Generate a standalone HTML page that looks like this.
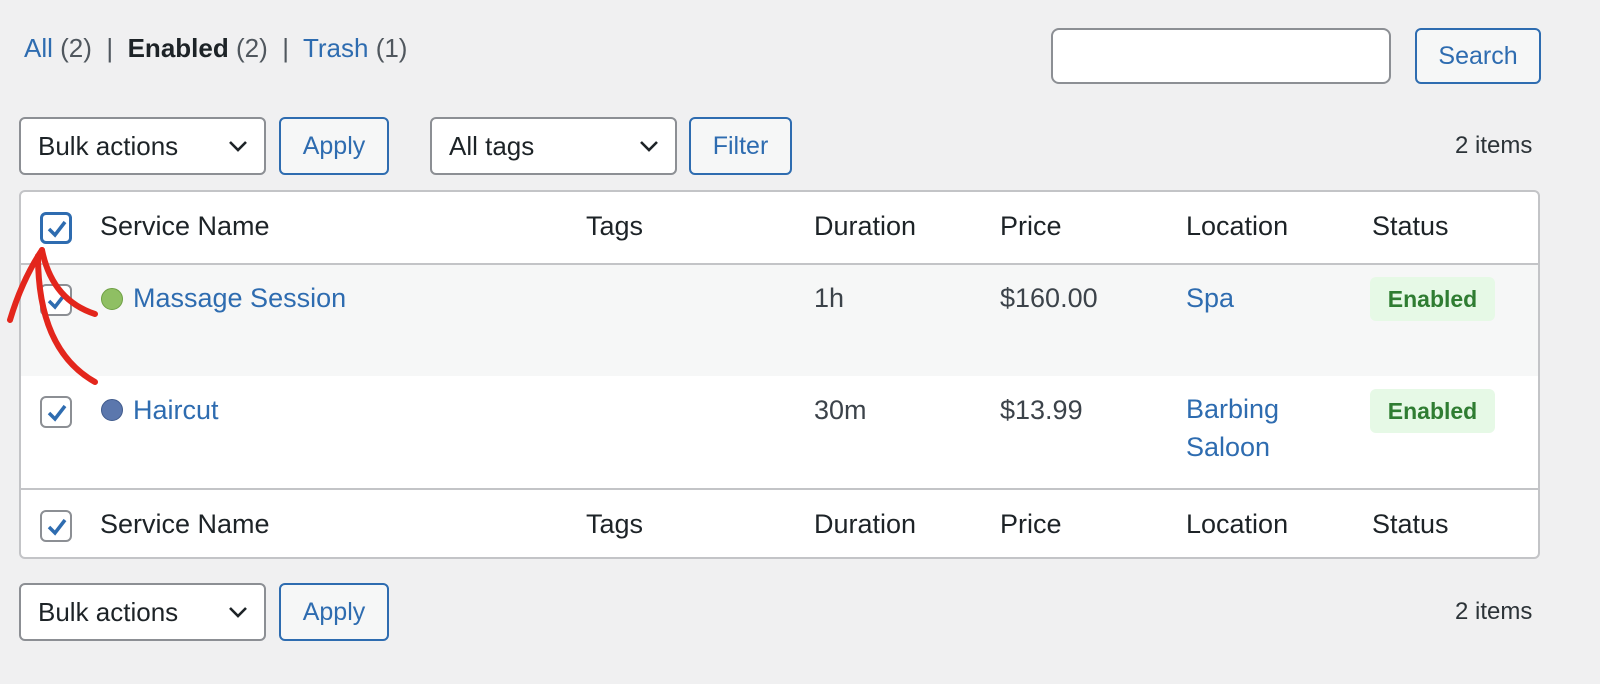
<!DOCTYPE html>
<html><head><style>
*{box-sizing:border-box;margin:0;padding:0}
body{width:1600px;height:684px;background:#f0f0f1;font-family:"Liberation Sans",sans-serif;color:#1d2327;position:relative;overflow:hidden;font-size:27px}
.a{position:absolute;white-space:nowrap}
.blue{color:#2e6cb0}
.grey{color:#50575e}
.btn{position:absolute;border:2px solid #2e6cb0;border-radius:6px;color:#2e6cb0;background:#f6f7f7;display:flex;align-items:center;justify-content:center;font-size:25px}
.sel{position:absolute;border:2px solid #8c8f94;border-radius:6px;background:#fff;font-size:26px;padding-left:17px;display:flex;align-items:center}
.sel svg{position:absolute;right:16px;top:50%;margin-top:-6px}
.cb{position:absolute;width:32px;height:32px;border:2px solid #8c8f94;border-radius:6px;background:#fff}
.cb svg{position:absolute;left:3px;top:3px}
.tbl{position:absolute;left:19px;top:190px;width:1521px;height:369px;background:#fff;border:2px solid #c3c4c7;border-radius:6px;overflow:hidden}
.badge{position:absolute;background:#e6f9e6;color:#2f7d32;border-radius:6px;width:125px;height:44px;display:flex;align-items:center;justify-content:center;font-size:23px;font-weight:bold}
.dot{position:absolute;width:22px;height:22px;border-radius:50%}
</style></head><body>
<div class="a" style="left:24px;top:33px;font-size:26px"><span class="blue">All</span> <span class="grey">(2)</span> <span style="color:#50575e">&nbsp;|&nbsp;</span> <b>Enabled</b> <span class="grey">(2)</span> <span style="color:#50575e">&nbsp;|&nbsp;</span> <span class="blue">Trash</span> <span class="grey">(1)</span></div>
<div class="a" style="left:1051px;top:28px;width:340px;height:56px;border:2px solid #8c8f94;border-radius:8px;background:#fff"></div>
<div class="btn" style="left:1415px;top:28px;width:126px;height:56px">Search</div>

<div class="sel" style="left:19px;top:117px;width:247px;height:58px">Bulk actions<svg width="20" height="12"><path d="M2 2 L10 10 L18 2" stroke="#1d2327" stroke-width="2.6" fill="none"/></svg></div>
<div class="btn" style="left:279px;top:117px;width:110px;height:58px">Apply</div>
<div class="sel" style="left:430px;top:117px;width:247px;height:58px">All tags<svg width="20" height="12"><path d="M2 2 L10 10 L18 2" stroke="#1d2327" stroke-width="2.6" fill="none"/></svg></div>
<div class="btn" style="left:689px;top:117px;width:103px;height:58px">Filter</div>
<div class="a grey" style="left:1455px;top:132px;font-size:24px;color:#2c3338">2 items</div>

<div class="tbl">
 <div style="position:absolute;left:0;top:71px;width:100%;height:2px;background:#c3c4c7"></div>
 <div style="position:absolute;left:0;top:73px;width:100%;height:111px;background:#f6f7f7"></div>
 <div style="position:absolute;left:0;top:296px;width:100%;height:2px;background:#c3c4c7"></div>
</div>
<div class="cb" style="left:40px;top:212px;border:3px solid #2e6cb0"><svg width="24" height="24" style="left:2px;top:2px"><path d="M4 12 L10 18 L20 5" stroke="#2e6cb0" stroke-width="3.5" fill="none"/></svg></div>
<div class="cb" style="left:40px;top:284px"><svg width="24" height="24"><path d="M4 12 L10 18 L20 5" stroke="#2e6cb0" stroke-width="3.5" fill="none"/></svg></div>
<div class="cb" style="left:40px;top:396px"><svg width="24" height="24"><path d="M4 12 L10 18 L20 5" stroke="#2e6cb0" stroke-width="3.5" fill="none"/></svg></div>
<div class="cb" style="left:40px;top:510px"><svg width="24" height="24"><path d="M4 12 L10 18 L20 5" stroke="#2e6cb0" stroke-width="3.5" fill="none"/></svg></div>

<div class="a" style="left:100px;top:211px">Service Name</div>
<div class="a" style="left:586px;top:211px">Tags</div>
<div class="a" style="left:814px;top:211px">Duration</div>
<div class="a" style="left:1000px;top:211px">Price</div>
<div class="a" style="left:1186px;top:211px">Location</div>
<div class="a" style="left:1372px;top:211px">Status</div>

<div class="dot" style="left:101px;top:288px;background:#8fbf63;border:1px solid #6ea043"></div>
<div class="a blue" style="left:133px;top:283px">Massage Session</div>
<div class="a" style="left:814px;top:283px;color:#3c434a">1h</div>
<div class="a" style="left:1000px;top:283px;color:#3c434a">$160.00</div>
<div class="a blue" style="left:1186px;top:283px">Spa</div>
<div class="badge" style="left:1370px;top:277px">Enabled</div>

<div class="dot" style="left:101px;top:399px;background:#5b77ad;border:1px solid #3f5a8c"></div>
<div class="a blue" style="left:133px;top:395px">Haircut</div>
<div class="a" style="left:814px;top:395px;color:#3c434a">30m</div>
<div class="a" style="left:1000px;top:395px;color:#3c434a">$13.99</div>
<div class="a blue" style="left:1186px;top:390px;line-height:38px;white-space:normal">Barbing<br>Saloon</div>
<div class="badge" style="left:1370px;top:389px">Enabled</div>

<div class="a" style="left:100px;top:509px">Service Name</div>
<div class="a" style="left:586px;top:509px">Tags</div>
<div class="a" style="left:814px;top:509px">Duration</div>
<div class="a" style="left:1000px;top:509px">Price</div>
<div class="a" style="left:1186px;top:509px">Location</div>
<div class="a" style="left:1372px;top:509px">Status</div>

<div class="sel" style="left:19px;top:583px;width:247px;height:58px">Bulk actions<svg width="20" height="12"><path d="M2 2 L10 10 L18 2" stroke="#1d2327" stroke-width="2.6" fill="none"/></svg></div>
<div class="btn" style="left:279px;top:583px;width:110px;height:58px">Apply</div>
<div class="a" style="left:1455px;top:598px;font-size:24px;color:#2c3338">2 items</div>

<svg class="a" style="left:0;top:0" width="120" height="400"><g stroke="#e3261c" stroke-width="6" fill="none" stroke-linecap="round">
<path d="M10 320 Q22 280 42 250"/>
<path d="M42 250 Q52 300 95 314"/>
<path d="M38 256 Q38 350 95 382"/>
</g></svg>
</body></html>
